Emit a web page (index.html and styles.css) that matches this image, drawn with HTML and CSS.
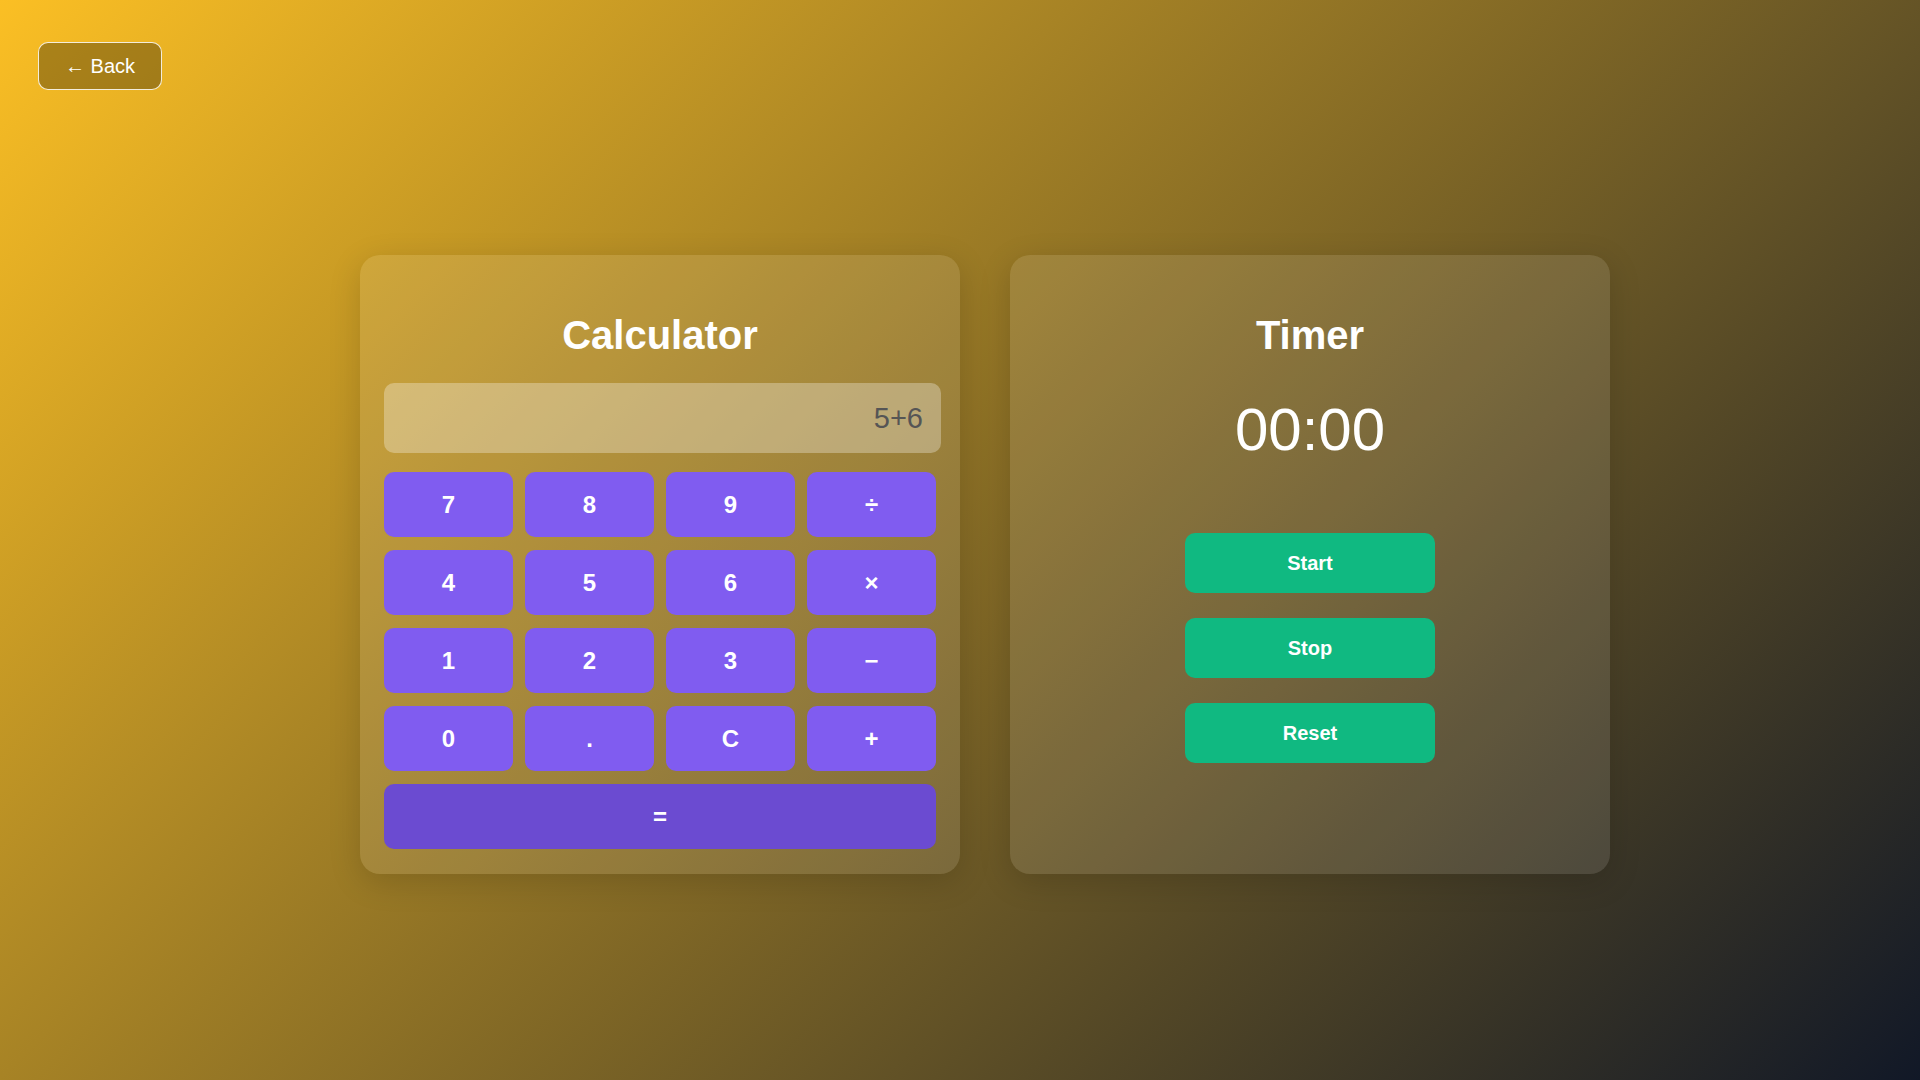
FILE: index.html
```html
<!DOCTYPE html>
<html lang="en">
<head>
<meta charset="utf-8">
<title>Calculator &amp; Timer</title>
<link rel="stylesheet" href="styles.css">
</head>
<body>
  <button class="back-btn">← Back</button>
  <main class="page">
    <div class="apps">
      <section class="card calculator">
        <h2 class="card-title">Calculator</h2>
        <div class="display">5+6</div>
        <div class="keys">
          <button class="key">7</button>
          <button class="key">8</button>
          <button class="key">9</button>
          <button class="key">÷</button>
          <button class="key">4</button>
          <button class="key">5</button>
          <button class="key">6</button>
          <button class="key">×</button>
          <button class="key">1</button>
          <button class="key">2</button>
          <button class="key">3</button>
          <button class="key">−</button>
          <button class="key">0</button>
          <button class="key">.</button>
          <button class="key">C</button>
          <button class="key">+</button>
          <button class="key key-equals">=</button>
        </div>
      </section>
      <section class="card timer">
        <h2 class="card-title">Timer</h2>
        <div class="time">00:00</div>
        <div class="timer-actions">
          <button class="timer-btn">Start</button>
          <button class="timer-btn">Stop</button>
          <button class="timer-btn">Reset</button>
        </div>
      </section>
    </div>
  </main>
</body>
</html>
```
FILE: styles.css
```css
html, body {
  margin: 0;
  padding: 0;
}

body {
  min-height: 100vh;
  background: linear-gradient(135deg, #fbbf24 0%, #111827 100%);
  font-family: "Liberation Sans", Arial, sans-serif;
  color: #fff;
}

button {
  font-family: inherit;
  cursor: pointer;
}

.back-btn {
  position: absolute;
  left: 38px;
  top: 42px;
  padding: 12px 26px;
  line-height: 22px;
  font-size: 20px;
  color: #fff;
  background: rgba(0, 0, 0, 0.3);
  border: 1px solid rgba(255, 255, 255, 0.85);
  border-radius: 10px;
}

.page {
  min-height: 100vh;
  box-sizing: border-box;
  padding: 49px 0 0 50px;
  display: flex;
  justify-content: center;
  align-items: center;
}

.apps {
  display: flex;
  gap: 50px;
}

.card {
  width: 600px;
  box-sizing: border-box;
  padding: 24px 24px 25px;
  background: rgba(255, 255, 255, 0.1);
  border-radius: 20px;
  box-shadow: 0 8px 32px rgba(0, 0, 0, 0.15);
  display: flex;
  flex-direction: column;
}

.card-title {
  margin: 33px 0 25px;
  font-size: 40px;
  line-height: 46px;
  font-weight: bold;
  text-align: center;
  color: #fff;
}

.display {
  height: 70px;
  line-height: 70px;
  margin: 0 -5px 19px 0;
  padding: 0 18px 0 20px;
  background: rgba(255, 255, 255, 0.3);
  border-radius: 10px;
  text-align: right;
  font-size: 29px;
  color: #555;
}

.keys {
  display: grid;
  grid-template-columns: repeat(4, 1fr);
  grid-auto-rows: 65px;
  column-gap: 12px;
  row-gap: 13px;
}

.key {
  border: none;
  border-radius: 10px;
  background: #805cf0;
  color: #fff;
  font-size: 24px;
  font-weight: bold;
}

.key-equals {
  grid-column: 1 / -1;
  background: #6b4bd1;
}

.time {
  margin-top: 12px;
  font-size: 60px;
  line-height: 69px;
  text-align: center;
  color: #fff;
}

.timer-actions {
  margin-top: 69px;
  display: flex;
  flex-direction: column;
  align-items: center;
  gap: 25px;
}

.timer-btn {
  width: 250px;
  height: 60px;
  border: none;
  border-radius: 10px;
  background: #10b981;
  color: #fff;
  font-size: 20px;
  font-weight: bold;
}
```
